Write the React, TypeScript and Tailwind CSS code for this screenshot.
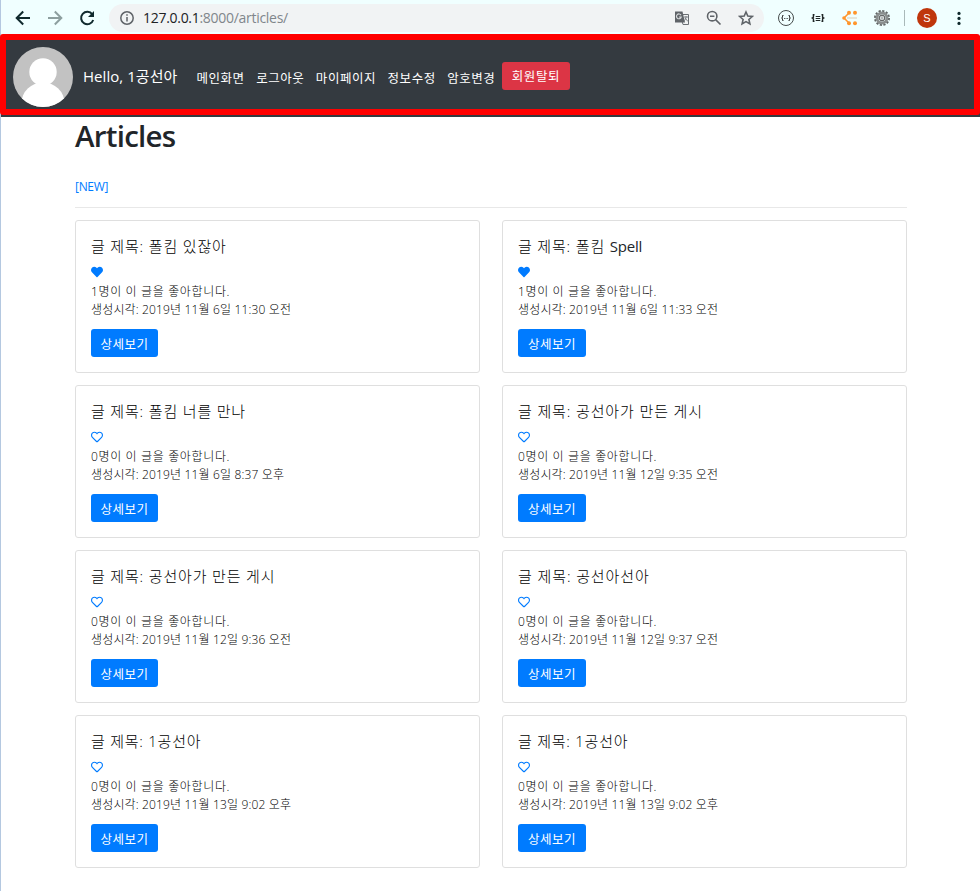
import React from "react";

const articles = [
  { title: "폴킴 있잖아", track: "tracking-[0.83px]", likes: 1, time: "2019년 11월 6일 11:30 오전" },
  { title: "폴킴 Spell", track: "tracking-[0.83px]", likes: 1, time: "2019년 11월 6일 11:33 오전" },
  { title: "폴킴 너를 만나", track: "tracking-[0.83px]", likes: 0, time: "2019년 11월 6일 8:37 오후" },
  { title: "공선아가 만든 게시", track: "tracking-[0.87px]", likes: 0, time: "2019년 11월 12일 9:35 오전" },
  { title: "공선아가 만든 게시", track: "tracking-[0.83px]", likes: 0, time: "2019년 11월 12일 9:36 오전" },
  { title: "공선아선아", track: "tracking-[0.9px]", likes: 0, time: "2019년 11월 12일 9:37 오전" },
  { title: "1공선아", track: "tracking-[0.75px]", likes: 0, time: "2019년 11월 13일 9:02 오후" },
  { title: "1공선아", track: "tracking-[0.75px]", likes: 0, time: "2019년 11월 13일 9:02 오후" },
];

const navItems = ["메인화면", "로그아웃", "마이페이지", "정보수정", "암호변경"];

function Heart({ filled }: { filled: boolean }) {
  return (
    <svg viewBox="0 0 512 512" className="block h-3 w-3 fill-[#007bff]">
      {filled ? (
        <path d="M462.300 62.600C407.500 15.900 326 24.300 275.700 76.200L256 96.500l-19.700-20.300C186.100 24.300 104.500 15.900 49.700 62.600c-62.800 53.600-66.100 149.800-9.900 207.900l193.500 199.800c12.500 12.900 32.800 12.900 45.300 0l193.500-199.800c56.300-58.100 53-154.300-9.800-207.900z" />
      ) : (
        <path d="M458.400 64.300C400.600 15.700 311.300 23 256 79.300 200.700 23 111.400 15.600 53.600 64.300-21.600 127.600-10.600 230.800 43 285.500l175.400 178.700c10 10.200 23.400 15.900 37.600 15.900 14.300 0 27.600-5.600 37.600-15.800L469 285.600c53.500-54.700 64.700-157.900-10.600-221.300zm-23.600 187.500L259.400 430.500c-2.400 2.400-4.400 2.400-6.800 0L77.200 251.800c-36.500-37.200-43.900-107.600 7.300-150.700 38.900-32.700 98.900-27.800 136.500 10.500l35 35.700 35-35.700c37.800-38.500 97.800-43.200 136.500-10.600 51.100 43.100 43.500 113.900 7.300 150.800z" />
      )}
    </svg>
  );
}

function BrowserBar() {
  return (
    <div className="flex h-[36px] w-full shrink-0 items-center bg-[#f0ffff] pl-[14px]">
      <svg viewBox="0 0 16 16" className="size-4 fill-none stroke-[#102a2d] stroke-2">
        <path d="M15 8H2M8.200 1.500 1.700 8l6.500 6.500" />
      </svg>
      <svg viewBox="0 0 16 16" className="ml-4 size-4 fill-none stroke-[#8d9f9f] stroke-2">
        <path d="M1 8h13M7.800 1.500 14.300 8l-6.500 6.500" />
      </svg>
      <svg viewBox="0 0 16 16" className="ml-4 size-4">
        <path d="M13.300 4.300A6.200 6.200 0 1 0 14.200 10" className="fill-none stroke-[#102a2d] stroke-2" />
        <path d="M15 1v6H9z" className="fill-[#102a2d]" />
      </svg>
      <div className="ml-[14px] flex h-7 w-[655px] items-center rounded-full bg-[#f1f3f4] pl-[11px]">
        <svg viewBox="0 0 14 14" className="size-[14px] fill-none stroke-[#5f6368] stroke-[1.5]">
          <circle cx="7" cy="7" r="6.200" />
          <path d="M7 6v4.500M7 3.300v1.500" />
        </svg>
        <div className="ml-[9px] w-[522px] whitespace-nowrap font-['Open_Sans',sans-serif] text-[14px] leading-5 tracking-[-0.29px] text-[#202124]">
          127.0.0.1<span className="text-[#80868b]">:8000/articles/</span>
        </div>
        <svg viewBox="0 0 16 16" className="ml-[9px] size-4">
          <path d="M6 4.500h8.500v10H9z" className="fill-[#f1f3f4] stroke-[#6a6f74] stroke-1" />
          <path d="M1 1.500h7.500l2.500 11H1z" className="fill-[#5f6368]" />
          <path d="M7 5.200A2.400 2.400 0 1 0 7.200 7H5" className="fill-none stroke-[#d5d8da] stroke-[1.200]" />
          <path d="M10 7h4M12 6v1c0 2-1 3-2 4m1-3 3 3.500" className="fill-none stroke-[#7a7f84] stroke-1" />
        </svg>
        <svg viewBox="0 0 16 16" className="ml-4 size-4 fill-none stroke-[#5f6368] stroke-[1.600]">
          <circle cx="6.200" cy="6.200" r="4.700" />
          <path d="M9.600 9.600 14.500 14.500M4 6.200h4.400" />
        </svg>
        <svg viewBox="0 0 16 16" className="ml-4 size-4 fill-none stroke-[#5f6368] stroke-[1.600]">
          <path d="m8 2 1.800 4.100 4.500.4-3.400 3 1 4.400L8 11.600l-3.900 2.300 1-4.400-3.400-3 4.500-.4z" />
        </svg>
      </div>
      <svg viewBox="0 0 16 16" className="ml-[14px] size-4 fill-none stroke-[#454b4b] stroke-1">
        <circle cx="8" cy="8" r="7.500" />
        <path d="M5.500 5.500H4.500v2L3.500 8l1 .5v2h1M10.500 5.500h1v2l1 .5-1 .5v2h-1" className="stroke-[#333]" />
        <path d="M6 8.500h.9M7.600 8.500h.9M9.200 8.500h.9" />
      </svg>
      <svg viewBox="0 0 16 16" className="ml-4 size-4 fill-none stroke-[#202626] stroke-[1.400]">
        <path d="M4.500 4.700H3.400v2.600L2.300 8l1.100.7v2.600h1.100M11.500 4.700h1.100v2.600l1.100.7-1.100.7v2.600h-1.100" />
        <path d="M5.700 6.500h4.600M5.700 8.500h4.600M5.700 10.500h4.600" className="stroke-1" />
      </svg>
      <svg viewBox="0 0 16 16" className="ml-4 size-4">
        <path d="M7 3 2 8l5 5" className="fill-none stroke-[#ff962d] stroke-[1.500]" />
        <g className="fill-[#ff962d]">
          <circle cx="7" cy="2.800" r="2" /><circle cx="13" cy="2.800" r="2" />
          <circle cx="2" cy="8" r="1.800" />
          <circle cx="7" cy="13.200" r="2" /><circle cx="13" cy="13.200" r="2" />
        </g>
        <path d="M5 8h10" className="stroke-[#d9cdb8] stroke-1" />
      </svg>
      <svg viewBox="0 0 16 16" className="ml-4 size-4 fill-none">
        <circle cx="8" cy="8" r="7" strokeDasharray="2.200 1.465" className="stroke-[#626666] stroke-2" />
        <circle cx="8" cy="8" r="5" className="stroke-[#8b8f8f] stroke-[3]" />
        <circle cx="8" cy="8" r="2.800" className="fill-[#d8dcdc] stroke-[#555] stroke-1" />
        <path d="M7 6.500h2v3H7z" className="fill-[#b5baba]" />
      </svg>
      <div className="ml-[14px] h-4 w-px bg-[#a9b9b9]" />
      <div className="ml-[12px] flex size-5 items-center justify-center rounded-full bg-[#bf360c] font-['Liberation_Sans',sans-serif] text-[11px] text-white">S</div>
      <svg viewBox="0 0 4 16" className="ml-[20px] h-4 w-1 fill-[#102a2d]">
        <circle cx="2" cy="3.400" r="1.600" /><circle cx="2" cy="8.400" r="1.600" /><circle cx="2" cy="13.400" r="1.600" />
      </svg>
    </div>
  );
}

function Navbar() {
  return (
    <nav className="relative flex h-[81px] w-full shrink-0 items-center bg-[#343a40] pl-[12px] text-white">
      <svg viewBox="0 0 60 60" className="size-[60px] rounded-full bg-[#c2c2c2]">
        <circle cx="30" cy="25" r="13.700" className="fill-white" />
        <ellipse cx="30" cy="56" rx="21.500" ry="20.500" className="fill-white" />
      </svg>
      <span className="ml-[10px] w-[113.5px] whitespace-nowrap pb-[2px] text-[15px] leading-6 tracking-[0.05px]">Hello, 1공선아</span>
      <div className="flex gap-[11.500px] pt-[5px] text-[12.500px] leading-[18px] tracking-[0.540px]">
        {navItems.map((n) => <span key={n} className="whitespace-nowrap">{n}</span>)}
      </div>
      <button className="mb-[2px] ml-[6.500px] h-7 w-[68px] rounded-[3px] bg-[#dc3545] pt-[3px] text-[12.500px] leading-[18px] tracking-[0.540px]">회원탈퇴</button>
      <div className="pointer-events-none absolute -left-px -top-[2px] h-[81px] w-[980px] rounded-[3px] border-6 border-[#ff0000]" />
    </nav>
  );
}

export default function App() {
  return (
    <div className="flex h-[891px] w-[980px] flex-col overflow-hidden bg-[#b4c8e0] pl-px font-['Open_Sans','Noto_Sans_CJK_KR',sans-serif] text-[#212529]">
      <BrowserBar />
      <Navbar />
      <main className="flex-1 bg-white pl-[74px] pr-[73px]">
        <h1 className="h-[61px] text-[29.500px] font-semibold leading-[38px] tracking-[-0.75px]">Articles</h1>
        <a className="block h-[18px] text-[12px] leading-[18px] tracking-[-0.300px] text-[#007bff]">[NEW]</a>
        <hr className="mb-3 mt-[11px] border-t border-[#e8e8e8]" />
        <div className="grid grid-cols-2 gap-x-[22px] gap-y-3">
          {articles.map((a, i) => (
            <article key={i} className="h-[153px] rounded-[3px] border border-[#dfdfdf] px-[15px] pt-4">
              <h2 className={`h-[18px] whitespace-nowrap text-[15px] font-light leading-[18px] text-black ${a.track}`}>
                글 제목:{" "}
                {a.title.endsWith("Spell") ? (
                  <>폴킴 <span className="font-normal tracking-[-0.2px] text-[#212529]">Spell</span></>
                ) : a.title}
              </h2>
              <div className="mt-[11px]"><Heart filled={a.likes > 0} /></div>
              <p className="mt-[5px] whitespace-nowrap text-[12px] font-light leading-[18px] tracking-[0.640px] text-black">{a.likes}명이 이 글을 좋아합니다.</p>
              <p className="whitespace-nowrap text-[12px] font-light leading-[18px] tracking-[0.150px] text-black">생성시각: {a.time}</p>
              <button className={`mt-[10px] h-7 rounded-[3px] bg-[#007bff] pt-[3px] text-[12.500px] leading-[18px] tracking-[0.450px] text-white ${i % 2 ? "w-[68px]" : "w-[67px]"}`}>상세보기</button>
            </article>
          ))}
        </div>
      </main>
    </div>
  );
}
